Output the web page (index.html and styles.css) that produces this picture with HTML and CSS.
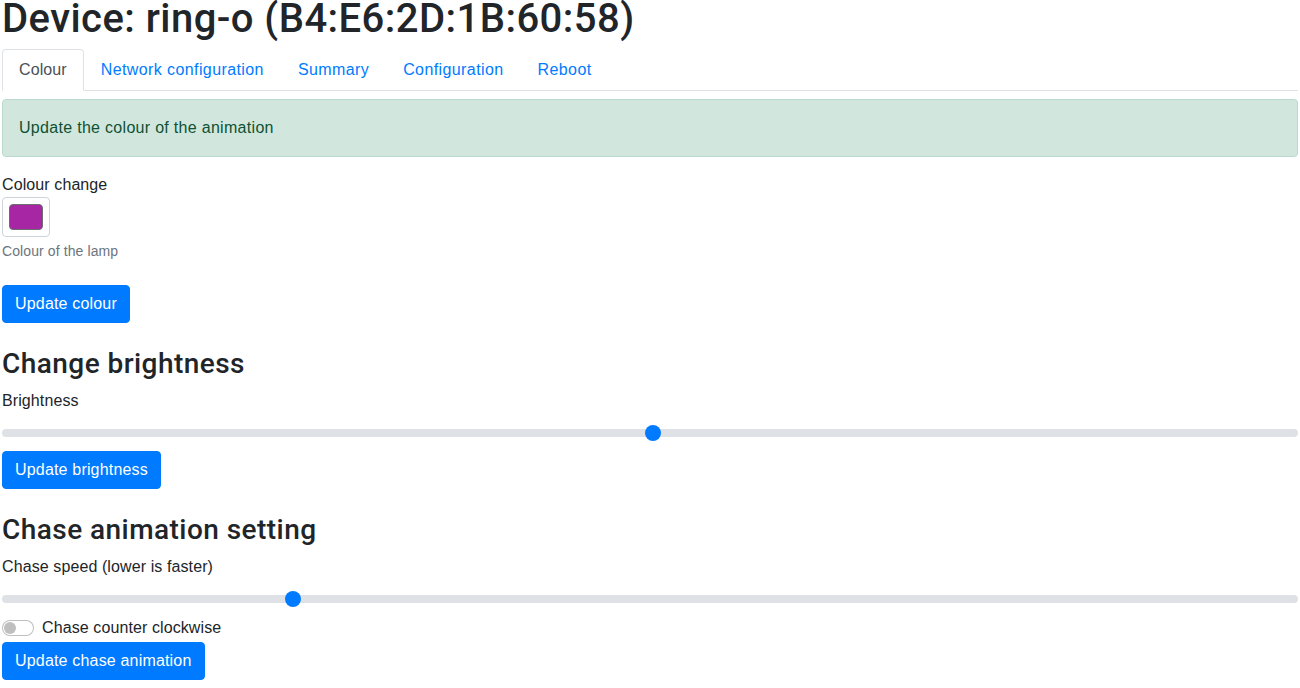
FILE: index.html
```html
<!DOCTYPE html>
<html lang="en">
<head>
<meta charset="utf-8">
<title>Device: ring-o</title>
<link rel="stylesheet" href="styles.css">
</head>
<body>
<div class="page">
  <h1 class="title">Device: ring-o (B4:E6:2D:1B:60:58)</h1>
  <ul class="tabs">
    <li><a class="tab active" href="#">Colour</a></li>
    <li><a class="tab" href="#">Network configuration</a></li>
    <li><a class="tab" href="#">Summary</a></li>
    <li><a class="tab" href="#">Configuration</a></li>
    <li><a class="tab" href="#">Reboot</a></li>
  </ul>
  <div class="alert">Update the colour of the animation</div>

  <form class="section first">
    <label class="label">Colour change</label>
    <div class="color-box"><div class="swatch"></div></div>
    <div class="help">Colour of the lamp</div>
    <button type="button" class="btn btn-colour">Update colour</button>
  </form>

  <form class="section">
    <h3 class="heading">Change brightness</h3>
    <label class="label label-range">Brightness</label>
    <div class="range"><div class="track"></div><div class="thumb" style="left: 50.2%"></div></div>
    <button type="button" class="btn btn-bright">Update brightness</button>
  </form>

  <form class="section">
    <h3 class="heading">Chase animation setting</h3>
    <label class="label label-range2">Chase speed (lower is faster)</label>
    <div class="range"><div class="track"></div><div class="thumb" style="left: 22.45%"></div></div>
    <div class="check">
      <span class="switch"><span class="knob"></span></span>
      <span class="check-label">Chase counter clockwise</span>
    </div>
    <button type="button" class="btn">Update chase animation</button>
  </form>
</div>
</body>
</html>
```
FILE: styles.css
```css
* { box-sizing: border-box; }
html, body { margin: 0; padding: 0; background: #fff; }
body {
  font-family: "Liberation Sans", Arial, sans-serif;
  font-size: 16px;
  line-height: 24px;
  letter-spacing: 0.1px;
  color: #212529;
  overflow: hidden;
}
.page { padding: 0 2px; }
.title {
  font-family: Roboto, "Liberation Sans", sans-serif;
  font-size: 40px;
  font-weight: 500;
  line-height: 38px;
  letter-spacing: 0.45px;
  margin: 0 0 11px;
}
.tabs {
  list-style: none;
  margin: 0;
  padding: 0;
  display: flex;
  border-bottom: 1px solid #dee2e6;
}
.tab {
  display: block;
  padding: 8px 16px;
  border: 1px solid transparent;
  border-radius: 4px 4px 0 0;
  margin-bottom: -1px;
  color: #007bff;
  text-decoration: none;
  letter-spacing: 0.4px;
}
.tab.active {
  color: #495057;
  border-color: #dee2e6 #dee2e6 #fff;
  background: #fff;
  letter-spacing: 0.1px;
}
.alert {
  margin-top: 8px;
  padding: 16px;
  border: 1px solid #badbcc;
  border-radius: 4px;
  background: #d1e7dd;
  color: #0f5132;
  letter-spacing: 0.3px;
}
.section { margin: 0; }
.section.first { padding-top: 16px; }
.label { display: block; }
.color-box {
  width: 48px;
  height: 40px;
  padding: 6px;
  border: 1px solid #ced4da;
  border-radius: 4px;
}
.swatch {
  width: 100%;
  height: 100%;
  background: #a626a4;
  border: 1px solid #6e6e6e;
  border-radius: 4px;
}
.help {
  margin-top: 4px;
  font-size: 14px;
  line-height: 21px;
  color: #6c757d;
}
.btn {
  display: block;
  font: inherit;
  letter-spacing: 0.18px;
  line-height: 24px;
  padding: 6px 12px;
  border: 1px solid #007bff;
  border-radius: 4px;
  background: #007bff;
  color: #fff;
  cursor: pointer;
}
.btn-colour { margin-top: 23px; }
.heading {
  font-family: Roboto, "Liberation Sans", sans-serif;
  font-size: 28px;
  font-weight: 500;
  line-height: 34px;
  letter-spacing: 0.45px;
  margin: 24px 0 8px;
}
.label-range { margin-bottom: 8px; }
.label-range2 { margin-bottom: 8px; }
.range {
  position: relative;
  height: 24px;
}
.track {
  position: absolute;
  left: 0;
  right: 0;
  top: 8px;
  height: 8px;
  border-radius: 16px;
  background: #dee2e6;
}
.thumb {
  position: absolute;
  top: 4px;
  width: 16px;
  height: 16px;
  margin-left: -8px;
  border-radius: 50%;
  background: #007bff;
}
.btn-bright { margin-top: 6px; }
.check {
  display: flex;
  align-items: center;
  gap: 8px;
  height: 24px;
  margin: 5px 0 2px;
}
.switch {
  position: relative;
  width: 32px;
  height: 16px;
  border: 1px solid rgba(0,0,0,.25);
  border-radius: 16px;
  background: #fff;
}
.knob {
  position: absolute;
  left: 1px;
  top: 1px;
  width: 12px;
  height: 12px;
  border-radius: 50%;
  background: #bfbfbf;
}
```
